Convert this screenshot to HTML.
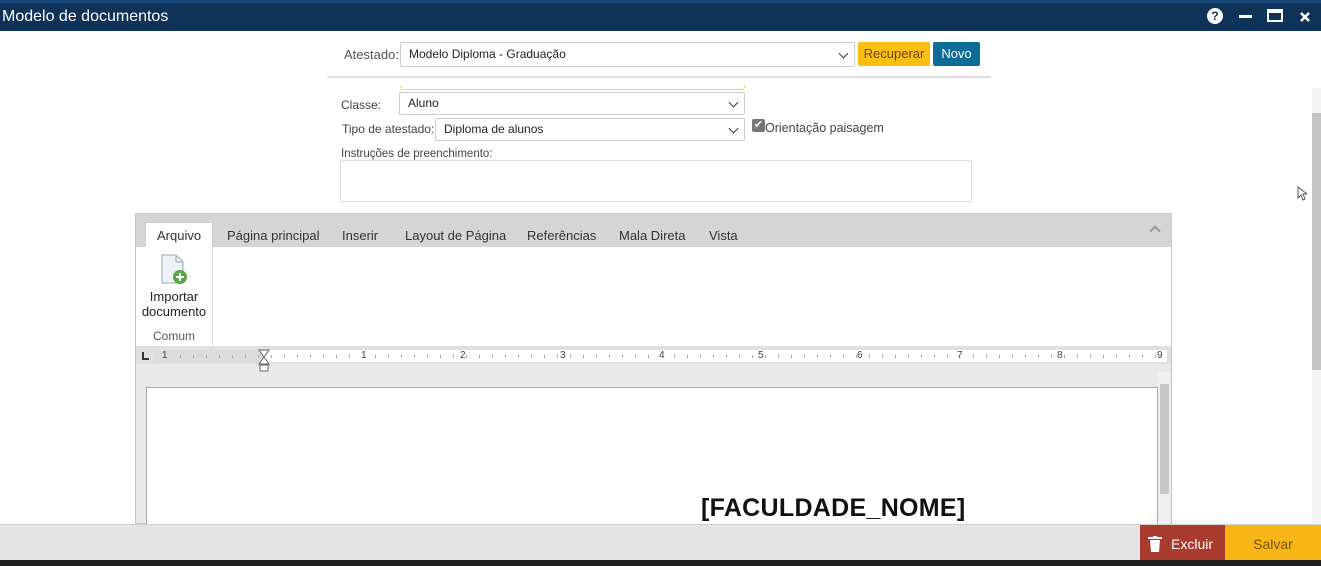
<!DOCTYPE html>
<html><head><meta charset="utf-8"><style>
*{box-sizing:border-box;margin:0;padding:0}
body{width:1321px;height:566px;overflow:hidden;background:#fff;font-family:"Liberation Sans",sans-serif;position:relative;color:#333}
.abs{position:absolute}
.title{left:0;top:0;width:1321px;height:31px;background:#0f3259;border-top:3px solid #1a4a7a}
.title span{position:absolute;left:2px;top:5px;color:#fff;font-size:16px}
.sel{border:1px solid #ccc;background:#fff;font-size:12px;color:#222;padding-left:8px;border-radius:2px}
.chev{position:absolute;right:7px;top:50%;width:7px;height:7px;border-right:1.5px solid #333;border-bottom:1.5px solid #333;transform:translateY(-70%) rotate(45deg)}
.lbl{font-size:12px;color:#444}
.tab{position:absolute;top:228px;font-size:13px;color:#333}
</style></head><body>
<div class="abs title"><span>Modelo de documentos</span>
<div class="abs" style="left:1207px;top:5px;width:16px;height:16px;border-radius:50%;background:#fff;color:#0f3259;font-size:12px;font-weight:bold;text-align:center;line-height:16px">?</div>
<div class="abs" style="left:1239px;top:12px;width:13px;height:3px;background:#fff"></div>
<div class="abs" style="left:1267px;top:6px;width:16px;height:13px;border:2px solid #fff;border-top-width:4px"></div>
<svg class="abs" style="left:1299px;top:8px" width="12" height="12"><path d="M2 2l8 8M10 2l-8 8" stroke="#fff" stroke-width="2.6"/></svg>
</div>

<div class="abs lbl" style="left:344px;top:47px;font-size:13px;color:#555">Atestado:</div>
<div class="abs sel" style="left:400px;top:42px;width:455px;height:25px;line-height:23px">Modelo Diploma - Graduação<i class="chev"></i></div>
<div class="abs" style="left:858px;top:42px;width:72px;height:24px;background:#fbbf14;color:#6b4a00;font-size:13px;text-align:center;line-height:24px;border-radius:2px">Recuperar</div>
<div class="abs" style="left:933px;top:42px;width:47px;height:24px;background:#0d6d99;color:#fff;font-size:13px;text-align:center;line-height:24px;border-radius:2px">Novo</div>
<div class="abs" style="left:327px;top:76px;width:664px;height:2px;background:#ddd"></div>
<div class="abs" style="left:400px;top:86px;width:345px;height:4px;border:1px solid #f0d060;border-top:none;border-radius:0 0 3px 3px"></div>

<div class="abs lbl" style="left:341px;top:98px">Classe:</div>
<div class="abs sel" style="left:399px;top:92px;width:346px;height:23px;line-height:21px">Aluno<i class="chev"></i></div>
<div class="abs lbl" style="left:342px;top:122px">Tipo de atestado:</div>
<div class="abs sel" style="left:435px;top:118px;width:310px;height:23px;line-height:21px">Diploma de alunos<i class="chev"></i></div>
<div class="abs" style="left:752px;top:119px;width:13px;height:13px;background:#777;border-radius:2px;color:#fff;font-size:11px;line-height:13px;text-align:center">✔</div>
<div class="abs lbl" style="left:765px;top:121px;font-size:12.5px">Orientação paisagem</div>
<div class="abs lbl" style="left:341px;top:148px;font-size:11.5px">Instruções de preenchimento:</div>
<div class="abs" style="left:340px;top:160px;width:632px;height:42px;border:1px solid #ddd;border-radius:2px"></div>

<div class="abs" style="left:1312px;top:88px;width:9px;height:436px;background:#f4f4f4"></div>
<div class="abs" style="left:1312px;top:113px;width:9px;height:257px;background:#c4c4c4"></div>
<svg class="abs" style="left:1297px;top:186px" width="10" height="15"><path d="M1 1v11l3-3 2 5 2-1-2-5h4z" fill="#fff" stroke="#555"/></svg>

<div class="abs" style="left:135px;top:213px;width:1037px;height:311px;border:1px solid #c8c8c8;background:#e9e9e9"></div>
<div class="abs" style="left:136px;top:214px;width:1035px;height:33px;background:#d5d5d5"></div>
<div class="abs" style="left:145px;top:222px;width:68px;height:26px;background:#fff;border:1px solid #ccc;border-bottom:none"></div>
<div class="tab" style="left:157px">Arquivo</div>
<div class="tab" style="left:227px">Página principal</div>
<div class="tab" style="left:342px">Inserir</div>
<div class="tab" style="left:405px">Layout de Página</div>
<div class="tab" style="left:527px">Referências</div>
<div class="tab" style="left:619px">Mala Direta</div>
<div class="tab" style="left:709px">Vista</div>
<div class="abs" style="left:1151px;top:227px;width:8px;height:8px;border-left:2px solid #999;border-top:2px solid #999;transform:rotate(45deg)"></div>
<div class="abs" style="left:136px;top:247px;width:1035px;height:99px;background:#fff"></div>
<div class="abs" style="left:212px;top:247px;width:1px;height:99px;background:#ddd"></div>
<svg class="abs" style="left:160px;top:254px" width="30" height="32"><path d="M2 1h14l7 7v21H2z" fill="#eef2f7" stroke="#9aa8b8"/><path d="M16 1v7h7" fill="none" stroke="#9aa8b8"/><circle cx="20" cy="23" r="7" fill="#5aa54a"/><path d="M20 19v8M16 23h8" stroke="#fff" stroke-width="2"/></svg>
<div class="abs" style="left:136px;top:289px;width:76px;text-align:center;font-size:13px;color:#222;line-height:15px">Importar<br>documento</div>
<div class="abs" style="left:136px;top:329px;width:76px;text-align:center;font-size:12px;color:#555">Comum</div>

<div class="abs" style="left:136px;top:346px;width:1035px;height:18px;background:#e0e0e0"></div>
<div class="abs" style="left:155px;top:350px;width:1012px;height:12px;background:#fff"></div>
<div class="abs" style="left:155px;top:350px;width:109px;height:12px;background:#dcdcdc"></div>
<div class="abs" style="left:155px;top:355px;width:1012px;height:3px;background:repeating-linear-gradient(90deg,transparent 0 12px,#aaa 12px 13px)"></div>
<div class="abs" style="left:142px;top:352px;width:7px;height:8px;border-left:2px solid #333;border-bottom:2px solid #333"></div>
<div class="abs" style="left:0;top:350px;font-size:10px;color:#444;line-height:12px">
<span class="abs" style="left:162px;background:#dcdcdc">1</span><span class="abs" style="left:361px;background:#fff">1</span><span class="abs" style="left:460px;background:#fff">2</span><span class="abs" style="left:560px;background:#fff">3</span><span class="abs" style="left:659px;background:#fff">4</span><span class="abs" style="left:758px;background:#fff">5</span><span class="abs" style="left:857px;background:#fff">6</span><span class="abs" style="left:957px;background:#fff">7</span><span class="abs" style="left:1057px;background:#fff">8</span><span class="abs" style="left:1157px;background:#fff">9</span></div>
<svg class="abs" style="left:258px;top:349px" width="12" height="24"><path d="M1 1h10L6 8zM1 15h10L6 8z" fill="#fff" stroke="#666"/><rect x="2" y="16" width="8" height="6" fill="#fff" stroke="#666"/></svg>

<div class="abs" style="left:146px;top:387px;width:1012px;height:137px;background:#fff;border:1px solid #aaa;border-bottom:none"></div>
<div class="abs" style="left:701px;top:494px;font-size:25px;font-weight:bold;color:#111;letter-spacing:0.3px">[FACULDADE_NOME]</div>
<div class="abs" style="left:1158px;top:372px;width:12px;height:152px;background:#f0f0f0"></div>
<div class="abs" style="left:1160px;top:384px;width:9px;height:110px;background:#c6c6c6"></div>

<div class="abs" style="left:0;top:524px;width:1321px;height:36px;background:#e4e4e4;border-top:1px solid #d0d0d0"></div>
<div class="abs" style="left:1140px;top:525px;width:85px;height:35px;background:#a83a2e;color:#fff;font-size:14px;line-height:38px;padding-left:31px">Excluir</div>
<svg class="abs" style="left:1148px;top:536px" width="14" height="16"><rect x="0" y="1" width="14" height="2" fill="#fff"/><rect x="5" y="0" width="4" height="2" fill="#fff"/><path d="M2 4h10l-1 12H3z" fill="#fff"/></svg>
<div class="abs" style="left:1225px;top:525px;width:96px;height:35px;background:#f8b616;color:#7a5600;font-size:14px;line-height:38px;text-align:center">Salvar</div>
<div class="abs" style="left:0;top:560px;width:1321px;height:6px;background:#1e1e1e"></div>
</body></html>
